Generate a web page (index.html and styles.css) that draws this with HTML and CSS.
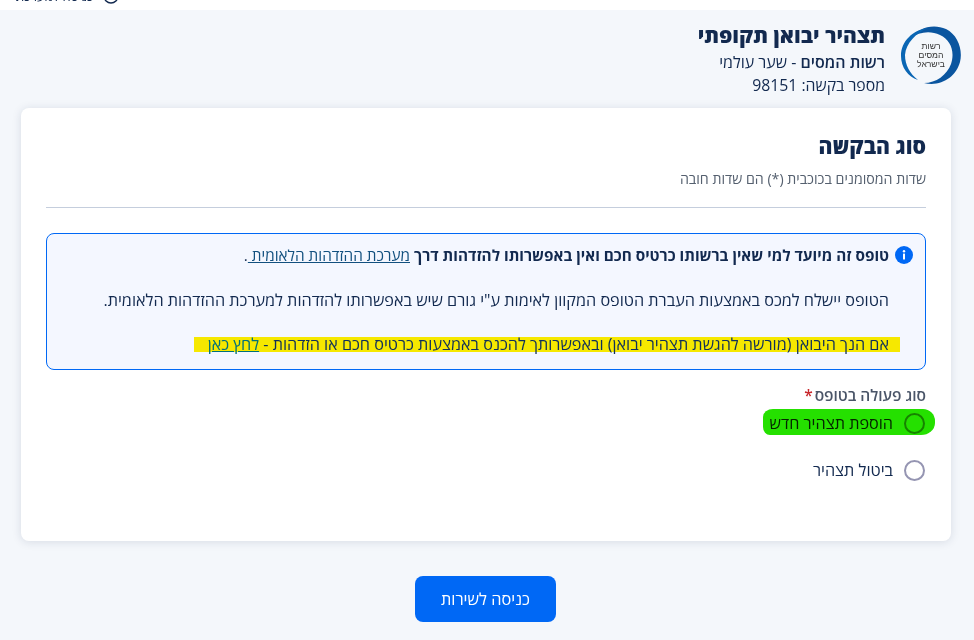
FILE: index.html
```html
<!DOCTYPE html>
<html lang="he" dir="rtl">
<head>
<meta charset="utf-8">
<title>תצהיר יבואן תקופתי</title>
<link rel="stylesheet" href="styles.css">
</head>
<body>
<div class="topbar">
  <div class="topbar-inner">
    <span class="topbar-text">כניסה למערכת</span>
    <svg class="topbar-icon" viewBox="0 0 18 18" width="16" height="16"><circle cx="9" cy="9" r="7.8" fill="none" stroke="#12294f" stroke-width="1.6"/><path d="M9 8v5" stroke="#12294f" stroke-width="1.6"/></svg>
  </div>
</div>
<header class="page-head">
  <div class="logo-wrap">
    <svg class="logo" viewBox="0 0 60 60" width="60" height="60" aria-hidden="true">
      <path d="M9 13 C17 3 32 -2 45 4 C57 10 62 25 59 37 C55 52 40 62 23 58 C35 58 46 50 50 39 C54 27 50 15 39 10 C29 5 18 7 9 13 Z" fill="#0a559f"/>
      <path d="M27 3 C12 5 0 16 0 31 C0 42 7 52 17 55 C9 49 4 40 4 30 C5 18 15 8 27 3 Z" fill="#0a66b4"/>
    </svg>
    <div class="logo-text"><span>רשות</span><span>המסים</span><span>בישראל</span></div>
  </div>
  <div class="head-text">
    <h1 class="head-title">תצהיר יבואן תקופתי</h1>
    <div class="head-line head-line-first"><b class="head-strong">רשות המסים</b> - שער עולמי</div>
    <div class="head-line head-line-num">מספר בקשה: 98151</div>
  </div>
</header>
<main class="card">
  <h2 class="card-title">סוג הבקשה</h2>
  <p class="card-sub">שדות המסומנים בכוכבית (*) הם שדות חובה</p>
  <hr class="divider">
  <section class="notice">
    <div class="notice-first">
      <svg class="info-icon" viewBox="0 0 18 18" width="18" height="18"><circle cx="9" cy="9" r="9" fill="#0068f5"/><rect x="8" y="7.6" width="2" height="6" rx=".5" fill="#fff"/><circle cx="9" cy="5.2" r="1.2" fill="#fff"/></svg>
      <p class="notice-line notice-lead"><b>טופס זה מיועד למי שאין ברשותו כרטיס חכם ואין באפשרותו להזדהות דרך</b> <a class="notice-link" href="#">מערכת ההזדהות הלאומית </a>.</p>
    </div>
    <p class="notice-line notice-plain notice-second">הטופס יישלח למכס באמצעות העברת הטופס המקוון לאימות ע"י גורם שיש באפשרותו להזדהות למערכת ההזדהות הלאומית.</p>
    <p class="notice-line notice-plain"><span class="marker">אם הנך היבואן (מורשה להגשת תצהיר יבואן) ובאפשרותך להכנס באמצעות כרטיס חכם או הזדהות - <a class="marker-link" href="#">לחץ כאן</a></span></p>
  </section>
  <div class="field-label">סוג פעולה בטופס<span class="req">*</span></div>
  <div class="options">
    <label class="option option-marked"><span class="radio"></span><span>הוספת תצהיר חדש</span></label>
    <label class="option"><span class="radio"></span><span>ביטול תצהיר</span></label>
  </div>
</main>
<div class="actions"><button class="primary" type="button">כניסה לשירות</button></div>
</body>
</html>
```
FILE: styles.css
```css
* { box-sizing: border-box; }
html, body { margin: 0; padding: 0; }
body {
  width: 974px;
  height: 640px;
  overflow: hidden;
  background: #f4f7fb;
  color: #12294f;
  font-family: "Open Sans", "Liberation Sans", sans-serif;
  font-size: 16px;
}
.topbar { height: 10px; background: #fff; overflow: hidden; }
.topbar-inner {
  display: flex;
  direction: ltr;
  align-items: center;
  gap: 10px;
  height: 18px;
  margin-top: -13px;
  padding-left: 16px;
  font-size: 13px;
}
.topbar-text { direction: rtl; }
.page-head {
  display: flex;
  align-items: flex-start;
  gap: 16px;
  padding: 15px 13px 0 0;
  height: 98px;
}
.logo-wrap { position: relative; width: 60px; height: 60px; flex: none; }
.logo { display: block; }
.logo-text {
  position: absolute;
  top: 17px;
  left: 0;
  width: 60px;
  display: flex;
  flex-direction: column;
  align-items: center;
  font-family: "Liberation Sans", sans-serif;
  font-size: 8.6px;
  color: #333;
}
.logo-text span { display: block; line-height: 9px; height: 9px; }
.head-text { display: flex; flex-direction: column; margin-top: -2px; }
.head-title { margin: 0; font-size: 21px; line-height: 25px; font-weight: 800; color: #12294f; }
.head-line { font-size: 15.8px; line-height: 23px; color: #12294f; }
.head-line-first { margin-top: 3px; font-size: 16px; }
.head-strong { font-weight: 600; }
.card {
  margin-right: 23px;
  height: 433px;
  width: 930px;
  background: #fff;
  border-radius: 8px;
  box-shadow: 0 1px 10px rgba(20, 40, 80, .13);
  padding: 24px 25px 25px;
}
.card-title { margin: 0; font-size: 21.2px; line-height: 27px; font-weight: 800; color: #12294f; }
.card-sub { margin: 10px 0 0; font-size: 14.2px; line-height: 20px; color: #55606f; }
.divider { border: 0; height: 1px; background: #c5cedd; margin: 18px 0 25px; }
.notice {
  height: 137px;
  border: 1px solid #0068f5;
  border-radius: 8px;
  background: #f4f7ff;
  padding: 9px 12px 0;
  display: flex;
  flex-direction: column;
}
.notice-first { display: flex; align-items: center; gap: 6px; height: 24px; }
.info-icon { flex: none; }
.notice-line { margin: 0; font-size: 16.2px; line-height: 24px; color: #12294f; white-space: nowrap; }
.notice-lead { font-size: 15.3px; }
.notice-link { color: #12507f; }
.notice-plain { margin-top: 20px; padding-right: 24px; }
.notice-second { margin-top: 21px; }
.marker {
  background: #f6e800;
  line-height: 15px;
  display: inline-block;
  margin-right: -11px;
  padding: 0 11px 0 14px;
  color: #10305a;
}
.marker-link { color: #00707a; }
.field-label { margin-top: 14px; font-size: 15.5px; line-height: 22px; font-weight: 600; color: #4a5568; }
.req { color: #c8282d; margin-right: 2px; }
.options { display: flex; flex-direction: column; gap: 23px; margin-top: 5px; }
.option {
  position: relative;
  display: flex;
  align-items: center;
  gap: 11px;
  height: 24px;
  font-size: 16.2px;
  color: #12294f;
  padding-right: 1px;
}
.radio {
  width: 21px;
  height: 21px;
  border: 2px solid #9595b2;
  border-radius: 50%;
  background: #fff;
  flex: none;
}
.option-marked::after {
  content: "";
  position: absolute;
  right: -9px;
  top: -2px;
  width: 172px;
  height: 26px;
  background: #25e000;
  border-radius: 10px 12px 14px 7px / 8px 12px 12px 8px;
  mix-blend-mode: multiply;
}
.actions { display: flex; justify-content: center; padding: 35px 0 0 0; margin-right: 3px; }
.primary {
  width: 141px;
  height: 46px;
  border: 0;
  border-radius: 8px;
  background: #0068f5;
  color: #fff;
  font-family: inherit;
  font-size: 16.3px;
  font-weight: 500;
  direction: rtl;
}
```
